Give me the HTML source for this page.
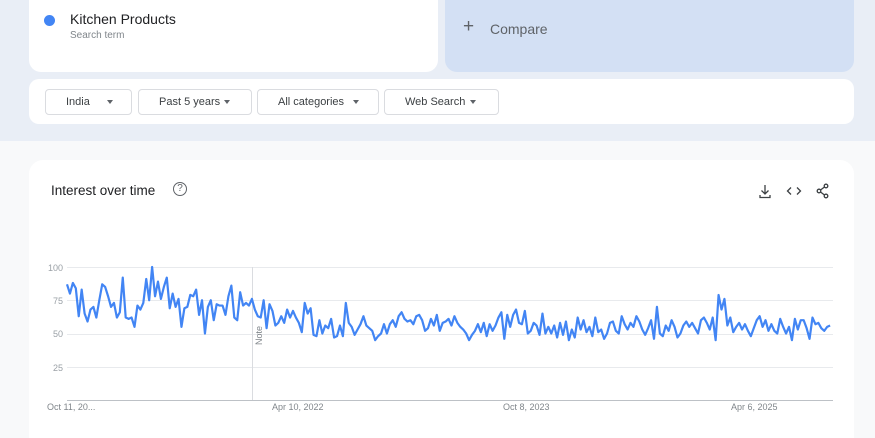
<!DOCTYPE html>
<html style="overflow:hidden"><head><style>
*{margin:0;padding:0;box-sizing:border-box}
html,body{width:875px;height:438px;overflow:hidden}
body{background:#e9eef6;font-family:"Liberation Sans",sans-serif;position:relative}
.card{position:absolute;background:#fff}
.dd{position:absolute;top:89px;height:26px;border:1px solid #dadce0;border-radius:4px;font-size:11px;color:#3c4043;line-height:24px;padding-left:20px}
.dd:after{content:"";position:absolute;top:10px;border-left:3.5px solid transparent;border-right:3.5px solid transparent;border-top:4px solid #5f6368}
.yl{position:absolute;left:48px;font-size:9px;color:#9aa0a6}
.xl{position:absolute;top:402px;font-size:9px;color:#80868b}
</style></head><body>
<div class="card" style="left:29px;top:0;width:409px;height:72px;border-radius:0 0 12px 12px"></div>
<div style="position:absolute;left:44px;top:15px;width:11px;height:11px;border-radius:50%;background:#4285f4"></div>
<div style="position:absolute;left:70px;top:11px;font-size:14px;color:#202124">Kitchen Products</div>
<div style="position:absolute;left:70px;top:30px;font-size:10px;color:#80868b">Search term</div>
<div style="position:absolute;left:445px;top:0;width:409px;height:72px;border-radius:0 0 12px 12px;background:#d3e0f4"></div>
<div style="position:absolute;left:463px;top:16px;font-size:19px;color:#5f6368;font-weight:300">+</div>
<div style="position:absolute;left:490px;top:21px;font-size:14px;color:#5f6368">Compare</div>
<div class="card" style="left:29px;top:79px;width:825px;height:45px;border-radius:10px"></div>
<div class="dd" style="left:45px;width:87px">India</div>
<div class="dd" style="left:138px;width:114px">Past 5 years</div>
<div class="dd" style="left:257px;width:122px">All categories</div>
<div class="dd" style="left:384px;width:115px">Web Search</div>
<style>
.dd[style*="left:45px"]:after{left:61px}
.dd[style*="left:138px"]:after{left:85px}
.dd[style*="left:257px"]:after{left:95px}
.dd[style*="left:384px"]:after{left:85px}
</style>
<div style="position:absolute;left:0;top:141px;width:875px;height:297px;background:#f8f9fa"></div>
<div class="card" style="left:29px;top:160px;width:825px;height:278px;border-radius:14px 14px 0 0"></div>
<div style="position:absolute;left:51px;top:183px;font-size:13.5px;color:#202124">Interest over time</div>
<div style="position:absolute;left:173px;top:182px;width:14px;height:14px;border:1.3px solid #5f6368;border-radius:50%;font-size:10px;color:#5f6368;text-align:center;line-height:12px">?</div>
<svg style="position:absolute;left:755px;top:181px" width="80" height="20" fill="none" stroke="#3c4043" stroke-width="1.3">
<path d="M10 4v9M6.5 9.5l3.5 3.5 3.5-3.5M5 14v2.5h10V14"/>
<path d="M36 6.5l-3.5 3.5 3.5 3.5M42 6.5l3.5 3.5-3.5 3.5"/>
<circle cx="71" cy="5" r="1.8"/><circle cx="64" cy="10" r="1.8"/><circle cx="71" cy="15" r="1.8"/><path d="M69.5 6L65.5 9M65.5 11l4 3"/>
</svg>
<svg style="position:absolute;left:0;top:0" width="875" height="438">
<g stroke="#e8eaed" stroke-width="1"><line x1="67" y1="267.5" x2="833" y2="267.5"/><line x1="67" y1="300.5" x2="833" y2="300.5"/><line x1="67" y1="334.5" x2="833" y2="334.5"/><line x1="67" y1="367.5" x2="833" y2="367.5"/></g>
<line x1="67" y1="400.5" x2="833" y2="400.5" stroke="#bdc1c6"/>
<line x1="252.5" y1="267" x2="252.5" y2="400" stroke="#dadce0"/>
<text transform="translate(262,345) rotate(-90)" font-size="9" fill="#80868b" font-family="Liberation Sans">Note</text>
<polyline transform="translate(67,400) scale(2.935,-1.33)" vector-effect="non-scaling-stroke" fill="none" stroke="#4285f4" stroke-width="2.2" stroke-linejoin="round"
points="0,87 1,80 2,88 3,84 4,63 5,83 6,65 7,59 8,68 9,70 10,62 11,75 12,87 13,85 14,78 15,70 16,73 17,62 18,66 19,92 20,62 21,61 22,62 23,55 24,71 25,68 26,73 27,91 28,75 29,100 30,78 31,89 32,76 33,85 34,92 35,69 36,80 37,70 38,76 39,55 40,69 41,70 42,79 43,78 44,83 45,64 46,75 47,50 48,70 49,75 50,60 51,72 52,71 53,71 54,64 55,78 56,86 57,62 58,60 59,81 60,71 61,73 62,71 63,76 64,68 65,63 66,62 67,75 68,54 69,72 70,67 71,56 72,58 73,63 74,58 75,68 76,62 77,67 78,62 79,58 80,51 81,73 82,65 83,69 84,49 85,48 86,60 87,50 88,56 89,54 90,61 91,47 92,48 93,56 94,48 95,73 96,58 97,55 98,49 99,53 100,57 101,63 102,56 103,54 104,52 105,45 106,48 107,50 108,57 109,50 110,57 111,60 112,55 113,63 114,66 115,61 116,59 117,60 118,57 119,63 120,64 121,60 122,52 123,54 124,61 125,56 126,64 127,52 128,58 129,59 130,61 131,56 132,63 133,58 134,55 135,53 136,50 137,45 138,49 139,52 140,57 141,51 142,58 143,48 144,57 145,52 146,56 147,62 148,66 149,46 150,64 151,55 152,64 153,68 154,58 155,57 156,67 157,50 158,52 159,58 160,56 161,49 162,65 163,50 164,55 165,50 166,56 167,47 168,58 169,49 170,59 171,45 172,53 173,47 174,62 175,53 176,60 177,51 178,55 179,48 180,62 181,51 182,53 183,46 184,50 185,58 186,59 187,52 188,50 189,63 190,57 191,53 192,58 193,55 194,63 195,59 196,53 197,49 198,54 199,60 200,46 201,70 202,50 203,48 204,56 205,52 206,60 207,55 208,47 209,50 210,56 211,59 212,55 213,58 214,54 215,50 216,60 217,62 218,58 219,53 220,62 221,45 222,79 223,68 224,76 225,56 226,62 227,51 228,55 229,58 230,53 231,57 232,52 233,48 234,54 235,60 236,63 237,55 238,60 239,52 240,57 241,52 242,50 243,61 244,55 245,50 246,55 247,45 248,61 249,53 250,60 251,60 252,54 253,46 254,62 255,57 256,58 257,54 258,52 259,55 260,56"/>
</svg>
<div class="yl" style="top:263px">100</div>
<div class="yl" style="top:296px;left:53px">75</div>
<div class="yl" style="top:329px;left:53px">50</div>
<div class="yl" style="top:363px;left:53px">25</div>
<div class="xl" style="left:47px">Oct 11, 20...</div>
<div class="xl" style="left:272px">Apr 10, 2022</div>
<div class="xl" style="left:503px">Oct 8, 2023</div>
<div class="xl" style="left:731px">Apr 6, 2025</div>
</body></html>
